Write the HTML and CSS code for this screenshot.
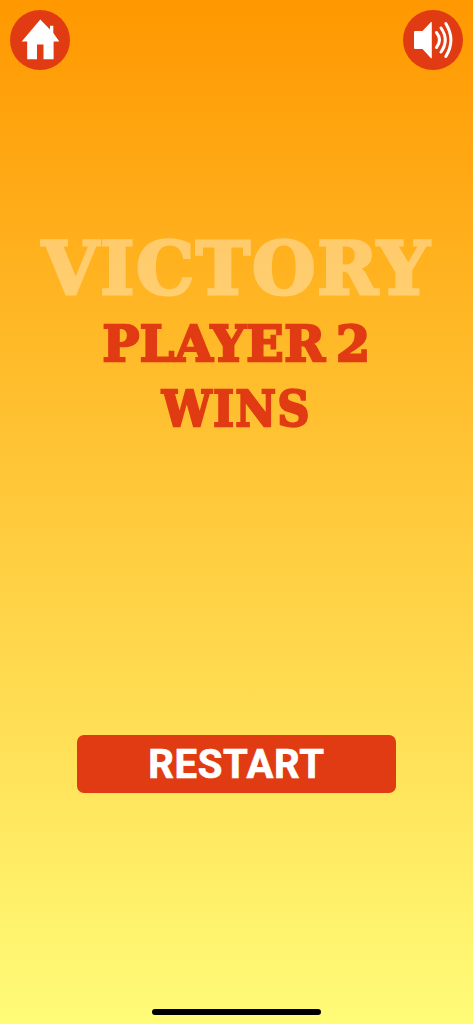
FILE: index.html
```
<!DOCTYPE html>
<html lang="en">
  <head>
    <meta charset="utf-8">
    <meta name="viewport" content="width=device-width, initial-scale=1">
    <title>Victory</title>
    <link rel="stylesheet" href="styles.css">
  </head>
  <body>
    <header class="top-bar">
      <button class="icon-button" type="button" aria-label="Home">
        <svg viewBox="0 0 60 60">
          <path fill="#fff" d="M30.300 9.500 L40 19.500 V15.700 H43.300 V23 L49.300 31.500 H43.600 V49.300 H33.500 V34.500 H27 V49.300 H17.200 V31.500 H11.700 Z"/>
        </svg>
      </button>
      <button class="icon-button" type="button" aria-label="Sound">
        <svg viewBox="0 0 60 60">
          <path fill="#fff" d="M12 21 H19.500 L28 12 H28.800 V48.200 H28 L19.500 39 H12 Q11 39 11 38 V22 Q11 21 12 21 Z"/>
          <path class="wave" d="M33.500 22.500 Q39.500 30 33.500 37.500"/>
          <path class="wave" d="M38 18 Q46.500 30 38 42"/>
          <path class="wave" d="M42.800 13.500 Q53 30 42.800 46.500"/>
        </svg>
      </button>
    </header>

    <main class="result">
      <h1 class="title">VICTORY</h1>
      <h2 class="winner">
        <span class="winner-name">PLAYER 2</span>
        <span class="winner-text">WINS</span>
      </h2>
      <button class="restart" type="button">RESTART</button>
    </main>

    <footer class="home-indicator"></footer>
  </body>
</html>
```

FILE: styles.css
```
* {
  box-sizing: border-box;
}

body {
  margin: 0;
  height: 1024px;
  display: flex;
  flex-direction: column;
  overflow: hidden;
  background: linear-gradient(#ff9800, #fffc78);
  font-family: Roboto, sans-serif;
}

.top-bar {
  display: flex;
  justify-content: space-between;
  padding: 10px 10px 0;
}

.icon-button {
  width: 60px;
  height: 60px;
  padding: 0;
  border: none;
  border-radius: 50%;
  background-color: #e13b13;
}

.icon-button svg {
  display: block;
  width: 60px;
  height: 60px;
}

.wave {
  fill: none;
  stroke: #fff;
  stroke-width: 3;
  stroke-linecap: round;
}

.result {
  flex: 1;
  display: flex;
  flex-direction: column;
  align-items: center;
}

.title {
  margin: 153px 0 0;
  font-family: "DejaVu Serif", serif;
  font-size: 73px;
  font-weight: bold;
  line-height: 90px;
  letter-spacing: 1.7px;
  color: #fff;
  -webkit-text-stroke: 3px #fff;
  opacity: 0.35;
}

.winner {
  display: flex;
  flex-direction: column;
  align-items: center;
  margin: -1px 0 0;
  font-family: "DejaVu Serif", serif;
  font-size: 49px;
  font-weight: bold;
  line-height: 65px;
  color: #e13b13;
  -webkit-text-stroke: 2.4px #e13b13;
  white-space: nowrap;
}

.winner-name {
  letter-spacing: 0.5px;
  word-spacing: -7px;
}

.winner-text {
  font-family: "DejaVu Serif Condensed", "DejaVu Serif", serif;
  font-stretch: semi-condensed;
  letter-spacing: 1.7px;
}

.restart {
  width: 319px;
  height: 58px;
  margin-top: 293px;
  padding: 2px 0 0;
  border: none;
  border-radius: 7px;
  background-color: #e13b13;
  color: #fff;
  font-family: Roboto, sans-serif;
  font-size: 40px;
  font-weight: bold;
  line-height: 56px;
  letter-spacing: 0.7px;
  -webkit-text-stroke: 0.7px #fff;
}

.home-indicator {
  width: 169px;
  height: 6px;
  margin: 0 auto 9px;
  border-radius: 3px;
  background-color: #000;
}
```
